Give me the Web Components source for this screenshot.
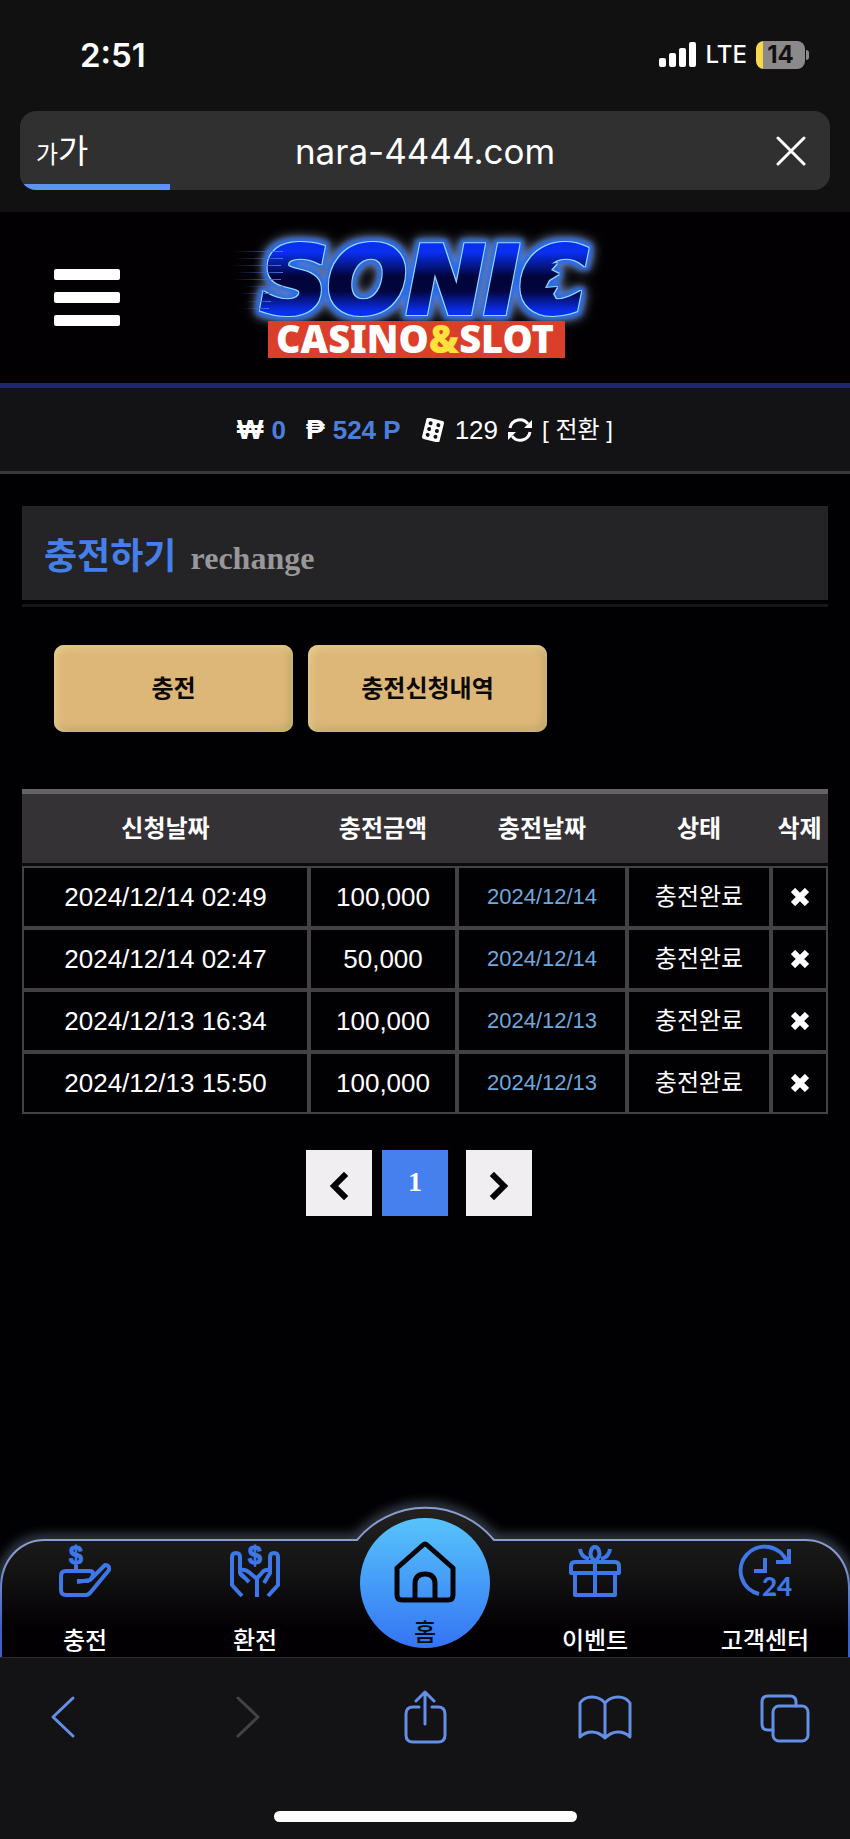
<!DOCTYPE html>
<html lang="ko">
<head>
<meta charset="UTF-8">
<meta name="viewport" content="width=device-width, initial-scale=1">
<title>충전하기</title>
<style>
    body{
        margin:0;
        min-height:100vh;
        display:flex;
        flex-direction:column;
        background:#010003;
        color:#fff;
        font-family:"Liberation Sans","Noto Sans CJK KR",sans-serif;
    }
    main{
        flex:1;
        padding:32px 22px;
    }
    .tabs{
        display:flex;
        gap:15px;
        padding:38px 32px 57px;
    }
</style>
</head>
<body>
    <status-bar time="2:51" network="LTE" battery="14"></status-bar>
    <address-bar>nara-4444.com</address-bar>
    <site-header></site-header>
    <balance-bar></balance-bar>
    <main>
        <page-title>
            충전하기
            <span slot="sub">rechange</span>
        </page-title>
        <div class="tabs">
            <gold-button>충전</gold-button>
            <gold-button>충전신청내역</gold-button>
        </div>
        <history-table></history-table>
        <page-numbers></page-numbers>
    </main>
    <bottom-menu>
        <menu-item>
            <svg slot="icon" viewBox="0 0 52 52" width="52" height="52" overflow="visible" fill="none" stroke="#3e78e8" stroke-width="4" stroke-linejoin="round">
                <path d="M17 20v5M30 36h-12M18 37l13-2 15-15q5 0 4 5L31 48q-2 2-4 2H7q-5 0-5-5V31q0-5 5-5h24q3 0 3 3t-3 6"/>
                <text x="17" y="19" text-anchor="middle" font-family="Liberation Sans" font-size="25" font-weight="700" fill="#3e78e8" stroke="#3e78e8" stroke-width="1">$</text>
            </svg>
            충전
        </menu-item>
        <menu-item>
            <svg slot="icon" viewBox="0 0 52 52" width="52" height="52" overflow="visible" fill="none" stroke="#3e78e8" stroke-width="4">
                <path d="M13 51L3 40V12q0-4 4-4t4 4v16l9 9M11 25q6-1 10 3l7 6v18M17 34l-6-5M39 51l10-11V12q0-4-4-4t-4 4v16l-6 10M41 25q-6-1-9 4l-5 5"/>
                <text x="26" y="19" text-anchor="middle" font-family="Liberation Sans" font-size="25" font-weight="700" fill="#3e78e8" stroke="#3e78e8" stroke-width="1">$</text>
            </svg>
            환전
        </menu-item>
        <home-item>홈</home-item>
        <menu-item>
            <svg slot="icon" viewBox="0 0 52 52" width="52" height="52" fill="none" stroke="#3e78e8" stroke-width="4">
                <path d="M2 28V21q0-4 4-4h40q4 0 4 4v7zM6 28v22h40V28M26 16v34M26 16q-6-4-4-10 1-4 4-4t4 4q2 6-4 10M11 4q1 8 9 10M41 4q-1 8-9 10" stroke-linejoin="round"/>
            </svg>
            이벤트
        </menu-item>
        <menu-item>
            <svg slot="icon" viewBox="0 0 52 52" width="52" height="52" overflow="visible" fill="none" stroke="#3e78e8" stroke-width="4">
                <path d="M20 49A24 24 0 1 1 48 17M50 4v13H37M26 13v13H15"/>
                <text x="38" y="51" text-anchor="middle" font-family="Lato" font-size="26" font-weight="900" fill="#3e78e8" stroke="none">24</text>
            </svg>
            고객센터
        </menu-item>
    </bottom-menu>
    <browser-toolbar></browser-toolbar>

<script>
/*
Base de todos los componentes: abre el shadow DOM y pega el template con sus estilos
*/
class BaseElement extends HTMLElement{
    constructor(){
        super();
        this.attachShadow({mode:"open"});
    }
    getHtml(){
        return `<slot></slot>`;
    }
    getStyles(){
        return ``;
    }
    getTemplate(){
        const template = document.createElement('template');
        template.innerHTML=`
            <style>
                *{box-sizing:border-box;}
                ${this.getStyles()}
            </style>
            ${this.getHtml()}
        `;
        return template;
    }
    render(){
        this.shadowRoot.appendChild(this.getTemplate().content.cloneNode(true));
    }
    connectedCallback(){
        if(!this.shadowRoot.firstChild) this.render();
    }
}

class StatusBar extends BaseElement{
    getHtml(){
        return `
            <time>${this.getAttribute('time')}</time>
            <div class="right">
                <svg viewBox="0 0 38 25" width="38" height="25" fill="#fff">
                    <rect x="0" y="16" width="7" height="9" rx="2"/>
                    <rect x="10" y="11" width="7" height="14" rx="2"/>
                    <rect x="20" y="6" width="7" height="19" rx="2"/>
                    <rect x="30" y="0" width="7" height="25" rx="2"/>
                </svg>
                <span>${this.getAttribute('network')}</span>
                <b>${this.getAttribute('battery')}</b>
            </div>
        `;
    }
    getStyles(){
        return `
            :host{
                display:flex;
                justify-content:space-between;
                align-items:center;
                height:111px;
                padding:0 40px 2px 80px;
                box-sizing:border-box;
                background:#111112;
                font-family:Inter,sans-serif;
            }
            time{font-size:33px;font-weight:600;}
            .right{display:flex;align-items:center;gap:9px;font-size:24px;}
            span{font-weight:500;}
            b{
                position:relative;
                width:49px;
                line-height:28px;
                margin-right:5px;
                border-radius:8px;
                text-align:center;
                font-size:24px;
                font-weight:700;
                color:#111;
                background:linear-gradient(90deg,#fbd84b 7px,#8b8989 7px);
            }
            b::after{
                content:"";
                position:absolute;
                right:-4px;
                top:9px;
                width:3px;
                height:10px;
                border-radius:0 4px 4px 0;
                background:#8b8989;
            }
        `;
    }
}
customElements.define('status-bar', StatusBar);

class AddressBar extends BaseElement{
    getHtml(){
        return `
            <div class="box">
                <button class="size" aria-label="글자 크기"><small>가</small>가</button>
                <span><slot></slot></span>
                <button class="stop" aria-label="중지">
                    <svg viewBox="0 0 30 30" width="30" height="30" stroke="#fff" stroke-width="3" stroke-linecap="round"><path d="M2 2l26 26M28 2L2 28"/></svg>
                </button>
            </div>
        `;
    }
    getStyles(){
        return `
            :host{
                display:block;
                padding:0 20px 22px;
                background:#111112;
            }
            .box{
                display:grid;
                grid-template-columns:80px 1fr 80px;
                align-items:center;
                height:79px;
                padding:0 16px;
                border-radius:16px;
                background:
                    linear-gradient(#5f92f2,#5f92f2) 0 100%/150px 6px no-repeat,
                    #303031;
            }
            span{
                text-align:center;
                font-family:Inter,sans-serif;
                font-size:35px;
                line-height:40px;
            }
            button{padding:0;border:0;background:none;color:#fff;}
            .size{text-align:left;font:33px/40px "Noto Sans CJK KR",sans-serif;}
            small{font-size:24px;}
            .stop{display:flex;justify-content:flex-end;padding-right:8px;}
        `;
    }
}
customElements.define('address-bar', AddressBar);

class SiteHeader extends BaseElement{
    getHtml(){
        return `
            <button aria-label="메뉴"><i></i><i></i><i></i></button>
            <svg class="logo" viewBox="0 0 400 145" width="400" height="145" role="img" aria-label="SONIC CASINO&amp;SLOT">
                <defs>
                    <linearGradient id="fill" gradientUnits="userSpaceOnUse" x1="0" y1="20" x2="0" y2="90">
                        <stop offset="0.1" stop-color="#0a2ff0"/>
                        <stop offset="0.45" stop-color="#02043c"/>
                        <stop offset="0.65" stop-color="#02043c"/>
                        <stop offset="0.95" stop-color="#0a2ff0"/>
                    </linearGradient>
                    <linearGradient id="speed">
                        <stop offset="0" stop-color="#3a55b0" stop-opacity="0"/>
                        <stop offset="1" stop-color="#4a78d8"/>
                    </linearGradient>
                    <filter id="neon" x="-10%" y="-40%" width="120%" height="180%" color-interpolation-filters="sRGB">
                        <feMorphology in="SourceAlpha" operator="dilate" radius="1" result="edge"/>
                        <feFlood flood-color="#8fdcff"/>
                        <feComposite in2="edge" operator="in" result="line"/>
                        <feMorphology in="SourceAlpha" operator="dilate" radius="4" result="wide"/>
                        <feGaussianBlur in="wide" stdDeviation="2" result="soft"/>
                        <feFlood flood-color="#2c69e6"/>
                        <feComposite in2="soft" operator="in" result="halo"/>
                        <feGaussianBlur in="wide" stdDeviation="6" result="far"/>
                        <feFlood flood-color="#8ea4c8"/>
                        <feComposite in2="far" operator="in" result="haze"/>
                        <feMerge>
                            <feMergeNode in="haze"/>
                            <feMergeNode in="halo"/>
                            <feMergeNode in="line"/>
                            <feMergeNode in="SourceGraphic"/>
                        </feMerge>
                    </filter>
                </defs>
                <g filter="url(#neon)" fill="url(#fill)">
                    <text x="199" y="88" text-anchor="middle" font-family="DejaVu Sans" font-weight="700" font-style="italic" font-size="93" stroke="url(#fill)" stroke-width="4">SONIC</text>
                    <path d="M312 40L332 38 326 45 334 49 324 55 320 63 332 62 328 69 332 76 312 74z"/>
                </g>
                <g fill="url(#speed)">
                    <rect x="8" y="26" width="50" height="1"/>
                    <rect x="10" y="33" width="48" height="1"/>
                    <rect x="6" y="40" width="50" height="1"/>
                    <rect x="10" y="47" width="48" height="1"/>
                    <rect x="6" y="54" width="50" height="1"/>
                    <rect x="18" y="61" width="40" height="1"/>
                    <rect x="14" y="68" width="34" height="1"/>
                    <rect x="20" y="76" width="26" height="1"/>
                    <rect x="18" y="83" width="26" height="1"/>
                </g>
                <rect x="43" y="96" width="297" height="37" fill="#db3f2c"/>
                <text x="190" y="128" text-anchor="middle" font-family="Noto Sans" font-weight="900" font-size="38" fill="#fff">CASINO<tspan fill="#ffe23c">&amp;</tspan>SLOT</text>
            </svg>
        `;
    }
    getStyles(){
        return `
            :host{
                display:grid;
                grid-template-columns:66px 1fr 66px;
                align-items:center;
                padding:13px 54px;
                border-bottom:5px solid #1e2869;
                background:#020003;
            }
            button{
                display:grid;
                gap:12px;
                padding:0;
                border:0;
                background:none;
            }
            i{height:11px;border-radius:2px;background:#fff;}
            .logo{justify-self:center;overflow:visible;}
        `;
    }
}
customElements.define('site-header', SiteHeader);

class BalanceBar extends BaseElement{
    getHtml(){
        return `
            <div><b class="sign">₩</b><b class="blue">0</b></div>
            <div><b class="sign">₱</b><b class="blue">524 P</b></div>
            <div>
                <svg viewBox="0 0 24 24" width="24" height="24">
                    <g transform="rotate(14 12 12)">
                        <rect x="3" y="1" width="18" height="22" rx="2" fill="#fff"/>
                        <g fill="#131214">
                            <circle cx="8" cy="6" r="2"/><circle cx="16" cy="6" r="2"/>
                            <circle cx="8" cy="12" r="2"/><circle cx="16" cy="12" r="2"/>
                            <circle cx="8" cy="18" r="2"/><circle cx="16" cy="18" r="2"/>
                        </g>
                    </g>
                </svg>
                <span>129</span>
                <svg viewBox="0 0 24 24" width="24" height="24" fill="none" stroke="#fff" stroke-width="3">
                    <path d="M2 10A10 10 0 0 1 20 6M22 14A10 10 0 0 1 4 18"/>
                    <path d="M24 2v8h-8zM0 22v-8h8z" fill="#fff" stroke="none"/>
                </svg>
                <a href="#">[ 전환 ]</a>
            </div>
        `;
    }
    getStyles(){
        return `
            :host{
                display:flex;
                justify-content:center;
                align-items:center;
                gap:20px;
                height:86px;
                box-sizing:border-box;
                border-bottom:3px solid #39383b;
                background:#131214;
                font-size:26px;
                line-height:32px;
            }
            div{display:flex;align-items:center;gap:8px;}
            div:last-child{gap:10px;}
            .sign{font-size:28px;}
            .blue{color:#4a7fdc;}
            a{color:#fff;font-size:24px;text-decoration:none;}
        `;
    }
}
customElements.define('balance-bar', BalanceBar);

class PageTitle extends BaseElement{
    getHtml(){
        return `
            <h1><slot></slot> <small><slot name="sub"></slot></small></h1>
        `;
    }
    getStyles(){
        return `
            :host{
                display:block;
                padding-bottom:4px;
                border-bottom:3px solid #161518;
            }
            h1{
                margin:0;
                padding:22px;
                font:700 36px/50px "Noto Sans CJK KR",sans-serif;
                color:#4480e8;
                background:#242326;
            }
            small{
                margin-left:4px;
                font:700 32px/40px "Liberation Serif",serif;
                color:#98979a;
            }
        `;
    }
}
customElements.define('page-title', PageTitle);

class GoldButton extends BaseElement{
    getHtml(){
        return `<button><slot></slot></button>`;
    }
    getStyles(){
        return `
            :host{display:block;}
            button{
                width:239px;
                height:87px;
                padding:0 0 4px;
                border:0;
                border-radius:10px;
                background:#ddb778;
                box-shadow:inset 2px 2px 8px #ecd398,inset -2px -2px 8px #a89a5c;
                font:700 24px/32px "Noto Sans CJK KR",sans-serif;
                color:#0c0805;
            }
        `;
    }
}
customElements.define('gold-button', GoldButton);

class HistoryTable extends BaseElement{
    getRows(){
        const rows = [
            ['2024/12/14 02:49','100,000','2024/12/14'],
            ['2024/12/14 02:47','50,000','2024/12/14'],
            ['2024/12/13 16:34','100,000','2024/12/13'],
            ['2024/12/13 15:50','100,000','2024/12/13']
        ];
        return rows.map(([asked,amount,done])=>`
            <tr>
                <td>${asked}</td>
                <td>${amount}</td>
                <td class="done">${done}</td>
                <td class="state">충전완료</td>
                <td>
                    <button aria-label="삭제">
                        <svg viewBox="0 0 18 18" width="18" height="18" stroke="#fff" stroke-width="6"><path d="M2 2l14 14M16 2L2 16"/></svg>
                    </button>
                </td>
            </tr>
        `).join('');
    }
    getHtml(){
        return `
            <table>
                <colgroup><col class="c1"><col class="c2"><col class="c3"><col class="c4"><col></colgroup>
                <thead>
                    <tr><th>신청날짜</th><th>충전금액</th><th>충전날짜</th><th>상태</th><th>삭제</th></tr>
                </thead>
                <tbody>${this.getRows()}</tbody>
            </table>
        `;
    }
    getStyles(){
        return `
            :host{display:block;}
            table{
                width:100%;
                table-layout:fixed;
                border-collapse:separate;
                border-spacing:0;
            }
            .c1{width:287px;}
            .c2{width:148px;}
            .c3{width:170px;}
            .c4{width:144px;}
            th{
                height:77px;
                padding:0 0 4px;
                border-top:5px solid #666266;
                border-bottom:3px solid #0b0a0c;
                background:#353235;
                font:700 24px/32px "Noto Sans CJK KR",sans-serif;
            }
            td{
                height:62px;
                padding:0;
                border:2px solid #444144;
                text-align:center;
                font-size:26px;
                line-height:32px;
            }
            .done{font-size:22px;color:#6fa8dc;}
            .state{font-size:24px;}
            button{display:block;margin:auto;padding:0;border:0;background:none;line-height:0;}
        `;
    }
}
customElements.define('history-table', HistoryTable);

class PageNumbers extends BaseElement{
    getHtml(){
        return `
            <button aria-label="이전"><svg viewBox="0 0 20 28" width="20" height="28"><path d="M15 4L5 14l10 10"/></svg></button>
            <button class="on">1</button>
            <button aria-label="다음"><svg viewBox="0 0 20 28" width="20" height="28"><path d="M5 4l10 10L5 24"/></svg></button>
        `;
    }
    getStyles(){
        return `
            :host{
                display:flex;
                justify-content:center;
                gap:10px;
                padding:36px 12px 0 0;
            }
            button{
                width:66px;
                height:66px;
                padding:0;
                border:0;
                background:#f1eef2;
                font:700 28px/32px "Liberation Serif",serif;
            }
            .on{margin-right:8px;padding-bottom:2px;color:#fff;background:#4580ee;}
            svg{display:block;margin:auto;padding-top:5px;box-sizing:content-box;fill:none;stroke:#000;stroke-width:6;stroke-linecap:square;}
        `;
    }
}
customElements.define('page-numbers', PageNumbers);

class BottomMenu extends BaseElement{
    getHtml(){
        return `
            <svg viewBox="0 0 850 167" preserveAspectRatio="none" aria-hidden="true">
                <defs>
                    <linearGradient id="bg" x1="0" y1="0" x2="0" y2="1">
                        <stop offset="0" stop-color="#222"/>
                        <stop offset="0.5" stop-color="#111011"/>
                        <stop offset="0.8" stop-color="#020003"/>
                    </linearGradient>
                    <linearGradient id="line" x1="0" y1="0" x2="0" y2="1">
                        <stop offset="0.3" stop-color="#8a9cd0"/>
                        <stop offset="0.8" stop-color="#3a62c0"/>
                    </linearGradient>
                    <filter id="haze" x="-5%" y="-40%" width="110%" height="180%"><feGaussianBlur stdDeviation="6"/></filter>
                </defs>
                <path d="M1 98C1 70 20 50 45 50H357A89 89 0 0 1 494 50H805C830 50 849 70 849 98" fill="none" stroke="#4c5866" stroke-width="8" filter="url(#haze)"/>
                <path d="M1 168V98C1 70 20 50 45 50H357A89 89 0 0 1 494 50H805C830 50 849 70 849 98V168" fill="url(#bg)" stroke="url(#line)" stroke-width="2"/>
            </svg>
            <nav><slot></slot></nav>
        `;
    }
    getStyles(){
        return `
            :host{
                display:block;
                position:relative;
                height:117px;
                font:500 24px/28px "Noto Sans CJK KR",sans-serif;
            }
            svg{
                position:absolute;
                left:0;
                bottom:0;
                width:100%;
                height:167px;
            }
            nav{
                position:relative;
                display:grid;
                grid-template-columns:repeat(5,1fr);
                justify-items:center;
                align-items:start;
            }
        `;
    }
}
customElements.define('bottom-menu', BottomMenu);

class MenuItem extends BaseElement{
    getHtml(){
        return `<a href="#"><slot name="icon"></slot><span><slot></slot></span></a>`;
    }
    getStyles(){
        return `
            :host{display:block;padding-top:5px;}
            a{
                display:flex;
                flex-direction:column;
                align-items:center;
                gap:28px;
                color:#fff;
                text-decoration:none;
            }
        `;
    }
}
customElements.define('menu-item', MenuItem);

class HomeItem extends BaseElement{
    getHtml(){
        return `
            <a href="#">
                <svg viewBox="0 0 62 62" width="62" height="62" fill="none" stroke="#050508" stroke-width="5" stroke-linejoin="round">
                    <path d="M3 27L29 4q2-2 4 0L59 27v27q0 5-5 5H8q-5 0-5-5zM21 59V43q0-10 10-10t10 10v16"/>
                </svg>
                <span><slot></slot></span>
            </a>
        `;
    }
    getStyles(){
        return `
            :host{display:block;margin-top:-22px;}
            a{
                display:flex;
                flex-direction:column;
                align-items:center;
                gap:14px;
                width:130px;
                height:130px;
                padding-top:23px;
                border-radius:50%;
                background:linear-gradient(#57c4fb,#3474f4);
                color:#050a1c;
                text-decoration:none;
            }
        `;
    }
}
customElements.define('home-item', HomeItem);

class BrowserToolbar extends BaseElement{
    getHtml(){
        return `
            <div class="row">
                <button aria-label="뒤로"><svg viewBox="0 0 54 54"><path d="M35 8L15 27l20 19"/></svg></button>
                <button aria-label="앞으로" disabled><svg viewBox="0 0 54 54"><path d="M20 8l20 19-20 19"/></svg></button>
                <button aria-label="공유"><svg viewBox="0 0 54 54"><path d="M21 17h-6q-7 0-7 7v21q0 7 7 7h25q7 0 7-7V24q0-7-7-7h-6M27 34V3M18 11l9-9 9 9"/></svg></button>
                <button aria-label="책갈피"><svg viewBox="0 0 54 54"><path d="M27 13Q22 7 14 7T2 13V47q5-5 12-5t13 6q6-6 13-6t12 5V13Q48 7 40 7T27 13v35"/></svg></button>
                <button aria-label="탭"><svg viewBox="0 0 54 54"><rect x="15" y="16" width="35" height="35" rx="6"/><path d="M15 40h-5q-6 0-6-6V12q0-6 6-6h22q6 0 6 6v4"/></svg></button>
            </div>
            <div class="bar"></div>
        `;
    }
    getStyles(){
        return `
            :host{
                display:flex;
                flex-direction:column;
                justify-content:space-between;
                height:182px;
                padding:32px 38px 17px;
                box-sizing:border-box;
                border-top:1px solid #2b2a2d;
                background:#131214;
            }
            .row{display:flex;justify-content:space-between;}
            button{padding:0;border:0;background:none;line-height:0;color:#648fe6;}
            button:disabled{color:#444246;}
            svg{width:54px;height:54px;fill:none;stroke:currentColor;stroke-width:3;stroke-linecap:round;stroke-linejoin:round;}
            .bar{align-self:center;width:303px;height:11px;border-radius:6px;background:#fff;}
        `;
    }
}
customElements.define('browser-toolbar', BrowserToolbar);
</script>
</body>
</html>
